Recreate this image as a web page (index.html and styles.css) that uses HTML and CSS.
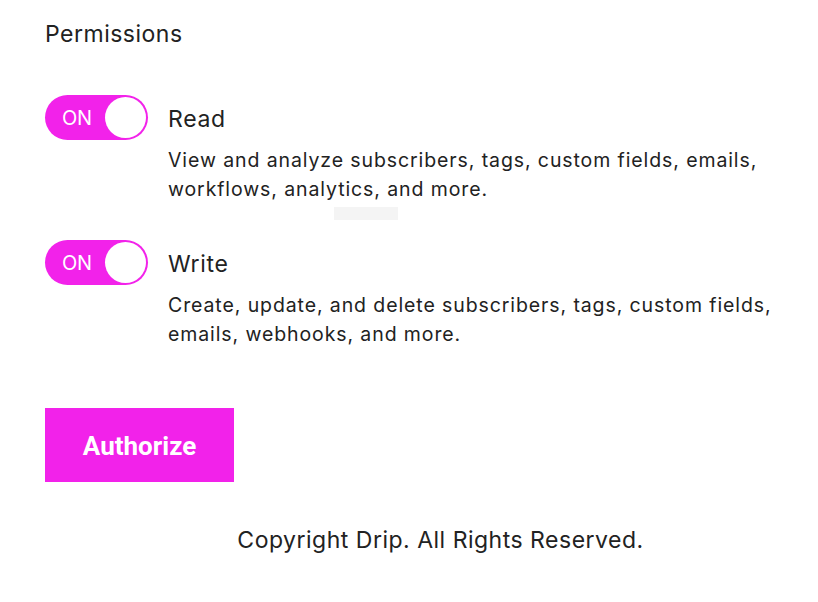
FILE: index.html
```html
<!DOCTYPE html>
<html lang="en">
<head>
<meta charset="utf-8">
<title>Permissions</title>
<link rel="stylesheet" href="styles.css">
</head>
<body>
<main class="page">
  <h2 class="section-title">Permissions</h2>

  <div class="perm">
    <div class="toggle"><span class="toggle-label">ON</span><span class="knob"></span></div>
    <div class="perm-text">
      <div class="perm-title">Read</div>
      <p class="perm-desc">View and analyze subscribers, tags, custom fields, emails,<br>workflows, analytics, and more.</p>
      <div class="ghost"></div>
    </div>
  </div>

  <div class="perm perm-second">
    <div class="toggle"><span class="toggle-label">ON</span><span class="knob"></span></div>
    <div class="perm-text">
      <div class="perm-title">Write</div>
      <p class="perm-desc">Create, update, and delete subscribers, tags, custom fields,<br>emails, webhooks, and more.</p>
    </div>
  </div>

  <button class="authorize" type="button">Authorize</button>

  <footer class="copyright">Copyright Drip. All Rights Reserved.</footer>
</main>
</body>
</html>
```

FILE: styles.css
```css
html, body {
  margin: 0;
  padding: 0;
  background: #ffffff;
}

body {
  font-family: Inter, "Noto Sans", "Liberation Sans", sans-serif;
  color: #222222;
  width: 818px;
  height: 602px;
  overflow: hidden;
}

.page {
  padding: 19px 0 0 45px;
}

.section-title {
  margin: 0;
  font-size: 23px;
  font-weight: 400;
  line-height: 30px;
  letter-spacing: 0.5px;
}

.perm {
  display: flex;
  align-items: flex-start;
  gap: 20px;
  margin-top: 46px;
}

.perm-second {
  margin-top: 20px;
}

.toggle {
  flex: none;
  width: 103px;
  height: 45px;
  box-sizing: border-box;
  border-radius: 23px;
  background: #f222ea;
  display: flex;
  align-items: center;
  justify-content: space-between;
  padding: 0 2px 0 17px;
}

.toggle-label {
  color: #ffffff;
  font-size: 20px;
  line-height: 1;
  letter-spacing: -0.2px;
}

.knob {
  width: 41px;
  height: 41px;
  border-radius: 50%;
  background: #ffffff;
}

.perm-text {
  padding-top: 10px;
}

.perm-title {
  font-size: 23px;
  line-height: 28px;
  letter-spacing: 0.7px;
}

.perm-desc {
  margin: 13px 0 0;
  font-size: 19.5px;
  line-height: 29px;
  letter-spacing: 0.9px;
  white-space: nowrap;
}

.ghost {
  width: 64px;
  height: 13px;
  margin: 3px 0 0 166px;
  background: #f4f4f4;
}

.authorize {
  display: block;
  margin-top: 59px;
  width: 189px;
  height: 74px;
  padding: 1px 0 0;
  border: 0;
  border-radius: 0;
  background: #f222ea;
  color: #ffffff;
  font-family: Roboto, "Liberation Sans", sans-serif;
  font-weight: 700;
  font-size: 26px;
  line-height: 1;
  cursor: pointer;
}

.copyright {
  margin: 44px 0 0 18px;
  text-align: center;
  font-size: 23px;
  line-height: 28px;
  letter-spacing: 0.5px;
}
```
